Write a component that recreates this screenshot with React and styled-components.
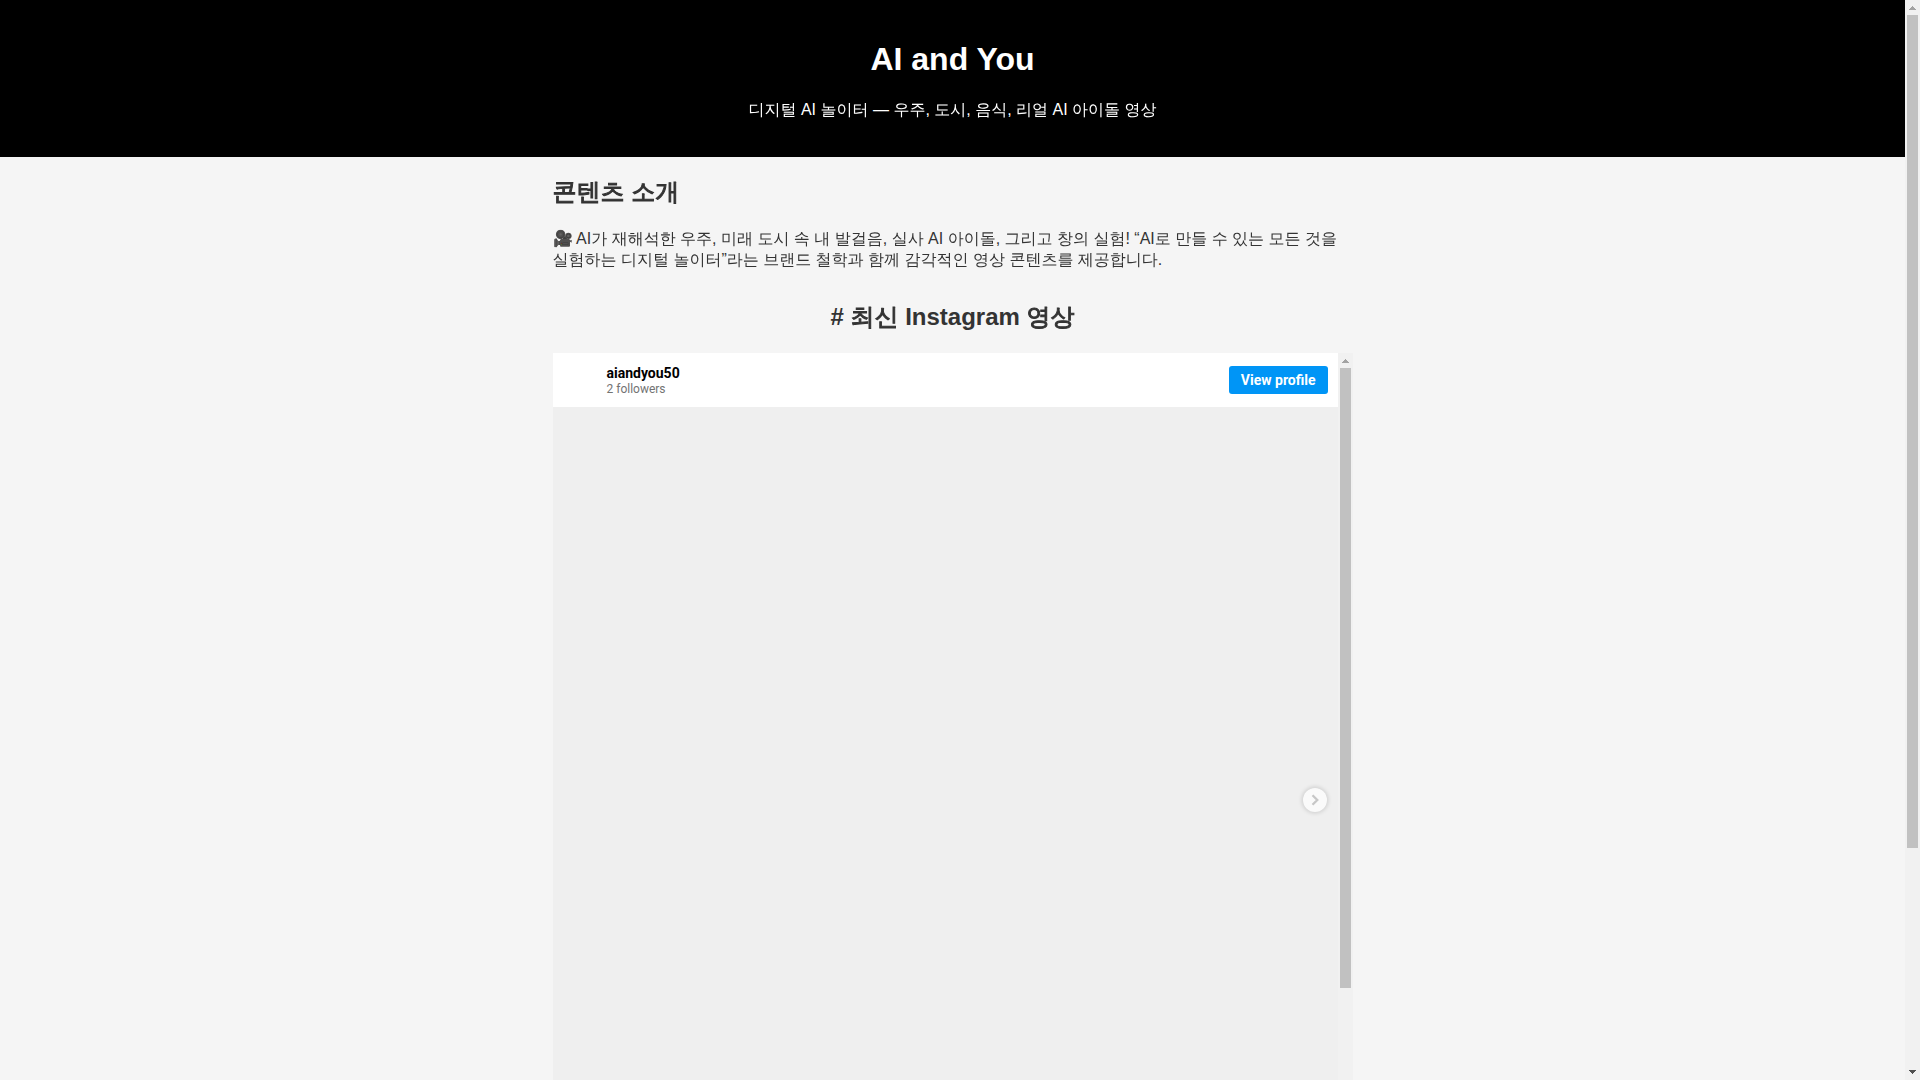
import React from "react";
import styled, { createGlobalStyle } from "styled-components";

const App = () => (
    <>
        <GlobalStyle/>
        <Window>
            <Page>
                <Header>
                    <Title>AI and You</Title>
                    <Tagline>디지털 AI 놀이터 — 우주, 도시, 음식, 리얼 AI 아이돌 영상</Tagline>
                </Header>
                <Main>
                    <Section>
                        <SectionTitle><Hangul>콘텐츠 소개</Hangul></SectionTitle>
                        <Paragraph>
                            🎥 AI가 재해석한 우주, 미래 도시 속 내 발걸음, 실사 AI 아이돌, 그리고 창의 실험! “AI로 만들 수 있는 모든 것을 실험하는 디지털 놀이터”라는 브랜드 철학과 함께 감각적인 영상 콘텐츠를 제공합니다.
                        </Paragraph>
                    </Section>
                    <Section>
                        <SectionTitle $centered># <Hangul>최신</Hangul> Instagram <Hangul>영상</Hangul></SectionTitle>
                        <Embed>
                            <EmbedContent>
                                <ProfileBar>
                                    <Profile>
                                        <Username href="#profile">aiandyou50</Username>
                                        <Followers>2 followers</Followers>
                                    </Profile>
                                    <ViewProfile type="button">View profile</ViewProfile>
                                </ProfileBar>
                                <Media>
                                    <NextButton type="button" aria-label="Next">
                                        <svg width="8" height="12" viewBox="0 0 8 12">
                                            <path d="M1.500 1.200 6.300 6l-4.800 4.800" fill="none" stroke="#c7c7c7" strokeWidth="2.300"/>
                                        </svg>
                                    </NextButton>
                                </Media>
                            </EmbedContent>
                            <ScrollBar shown={620} rest={150}/>
                        </Embed>
                    </Section>
                </Main>
            </Page>
            <ScrollBar shown={833} rest={217}/>
        </Window>
    </>
);

const ScrollBar = ({ shown, rest }) => (
    <Track aria-hidden="true">
        <Arrow viewBox="0 0 15 15" shapeRendering="crispEdges">
            <path d="M7 6h1v1h1v1h1v1h1v1H4V9h1V8h1V7h1z" fill="#a3a3a3"/>
        </Arrow>
        <Thumb $grow={shown}/>
        <Space $grow={rest}/>
        <Arrow viewBox="0 0 15 15" shapeRendering="crispEdges">
            <path d="M4 5h7v1h-1v1H9v1H8v1H7V8H6V7H5V6H4z" fill="#505050"/>
        </Arrow>
    </Track>
);

const GlobalStyle = createGlobalStyle`
    body {
        margin : 0;
        background-color : #f5f5f5;
        color : #333;
        font-family : "Liberation Sans", "WenQuanYi Zen Hei", "Noto Sans CJK KR", sans-serif;
        font-size : 16px;
    }
`;

const Window = styled.div`
    display : flex;
    height : 100vh;
    overflow : hidden;
`;

const Page = styled.div`
    flex : 1;
    min-width : 0;
    overflow : hidden;
`;

const Header = styled.header`
    padding : 20px;
    background-color : #000;
    color : #fff;
    text-align : center;
`;

const Title = styled.h1`
    margin : 21px 0;
    font-size : 32px;
    line-height : 37px;
`;

const Tagline = styled.p`
    margin : 0 0 16px;
    line-height : 22px;
`;

const Main = styled.main`
    max-width : 800px;
    margin : 0 auto;
`;

const Section = styled.section`
    display : flow-root;
    margin-bottom : 12px;
`;

const SectionTitle = styled.h2`
    margin : 19px 0 20px;
    font-size : 24px;
    line-height : 32px;
    text-align : ${({ $centered }) => $centered ? "center" : "left"};
`;

/* the Korean face has no bold weight, so headings thicken its strokes */
const Hangul = styled.span`
    -webkit-text-stroke : 1px currentColor;
`;

const Paragraph = styled.p`
    margin : 0;
    line-height : 21px;
`;

const Embed = styled.div`
    display : flex;
    height : 800px;
`;

const EmbedContent = styled.div`
    flex : 1;
    overflow : hidden;
    font-family : Roboto, sans-serif;
`;

const ProfileBar = styled.div`
    display : flex;
    align-items : center;
    justify-content : space-between;
    box-sizing : border-box;
    height : 54px;
    padding : 0 10px 0 54px;
    background-color : #fff;
`;

const Profile = styled.div`
    display : flex;
    flex-direction : column;
    padding-top : 2px;
`;

const Username = styled.a`
    color : #000;
    font-size : 14px;
    font-weight : 700;
    line-height : 16px;
    text-decoration : none;
`;

const Followers = styled.span`
    color : #737373;
    font-size : 12px;
    line-height : 16px;
`;

const ViewProfile = styled.button`
    height : 28px;
    padding : 0 12px;
    border : 0;
    border-radius : 3px;
    background-color : #0095f6;
    color : #fff;
    font-family : inherit;
    font-size : 14px;
    font-weight : 700;
`;

const Media = styled.div`
    position : relative;
    aspect-ratio : 1;
    background-color : #efefef;
`;

const NextButton = styled.button`
    position : absolute;
    top : 50%;
    right : 11px;
    display : flex;
    align-items : center;
    justify-content : center;
    width : 24px;
    height : 24px;
    margin-top : -12px;
    padding : 0;
    border : 0;
    border-radius : 50%;
    background-color : #fafafa;
    box-shadow : 0 0 4px 1px rgba(0, 0, 0, 0.15);
`;

const Track = styled.div`
    display : flex;
    flex-direction : column;
    flex : none;
    align-items : center;
    width : 15px;
    background-color : #f1f1f1;
`;

const Arrow = styled.svg`
    flex : none;
    width : 15px;
    height : 15px;
`;

const Thumb = styled.div`
    flex : ${({ $grow }) => $grow} 0 0;
    width : 11px;
    background-color : #c1c1c1;
`;

const Space = styled.div`
    flex : ${({ $grow }) => $grow} 0 0;
`;

export default App;
